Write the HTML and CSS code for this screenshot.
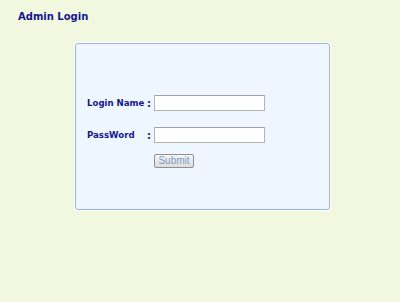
FILE: index.html
```html
<!DOCTYPE html>
<html>
<head>
<meta charset="utf-8">
<link rel="stylesheet" href="styles.css">
</head>
<body>
<div class="page">
  <h1 class="title">Admin Login</h1>
  <div class="panel">
    <form class="login-form">
      <div class="row">
        <label class="label"><span>Login Name</span><span class="colon">:</span></label>
        <input class="field" type="text">
      </div>
      <div class="row">
        <label class="label"><span>PassWord</span><span class="colon">:</span></label>
        <input class="field" type="password">
      </div>
      <div class="row actions">
        <button class="submit" type="button">Submit</button>
      </div>
    </form>
  </div>
</div>
</body>
</html>
```

FILE: styles.css
```css
html, body {
  margin: 0;
  padding: 0;
  background: #f1f8df;
}
.page {
  width: 400px;
  height: 302px;
  font-family: "DejaVu Sans", Verdana, sans-serif;
}
.title {
  margin: 0;
  padding: 11px 0 0 18px;
  height: 32px;
  box-sizing: border-box;
  font-size: 10px;
  line-height: 12px;
  font-weight: bold;
  color: #14178a;
}
.panel {
  margin: 11px 0 0 75px;
  width: 255px;
  height: 167px;
  box-sizing: border-box;
  background: #eef6ff;
  border: 1px solid #9db5d9;
  border-radius: 3px;
  box-shadow: 0 0 0 1px #ffffff;
  padding: 51px 0 0 11px;
}
.login-form {
  display: flex;
  flex-direction: column;
  gap: 16px;
  margin: 0;
}
.row {
  display: flex;
  align-items: center;
  gap: 3px;
}
.label {
  width: 64px;
  display: flex;
  justify-content: space-between;
  font-size: 8.6px;
  font-weight: bold;
  color: #14178a;
}
.colon {
  font-size: 10px;
}
.field {
  width: 111px;
  height: 16px;
  box-sizing: border-box;
  margin: 0;
  padding: 0 2px;
  background: #ffffff;
  border: 1px solid #b4b4b4;
  border-top-color: #a0a0a0;
}
.actions {
  margin-top: -5px;
  padding-left: 67px;
}
.submit {
  width: 40px;
  height: 14px;
  box-sizing: border-box;
  margin: 0;
  padding: 0;
  font-family: "Liberation Sans", Arial, sans-serif;
  font-size: 10px;
  line-height: 12px;
  color: #7b9bc3;
  background: linear-gradient(#f7f7f7, #dcdcdc);
  border: 1px solid #8f8f8f;
  border-radius: 2px;
}
```
